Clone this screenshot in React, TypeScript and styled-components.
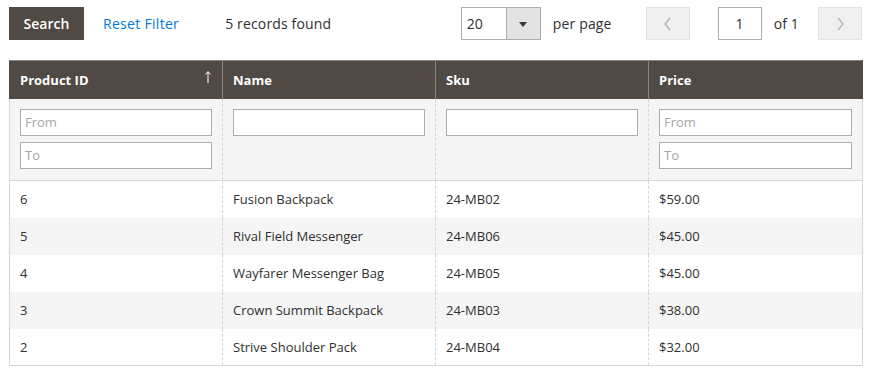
import React from "react";
import styled, { createGlobalStyle } from "styled-components";

const Global = createGlobalStyle`
  html, body { margin: 0; padding: 0; background: #fff; }
  body { font-family: "Open Sans", "Liberation Sans", sans-serif; color: #303030; font-size: 14px; }
  * { box-sizing: border-box; }
`;

const Page = styled.div`
  width: 871px;
  padding: 7px 9px 0 9px;
`;

const Toolbar = styled.div`
  display: flex;
  justify-content: space-between;
  align-items: center;
  height: 33px;
`;

const Group = styled.div`
  display: flex;
  align-items: center;
  height: 33px;
`;

const SearchButton = styled.button`
  width: 75px;
  height: 33px;
  border: 0;
  background: #514943;
  color: #fff;
  font-family: inherit;
  font-size: 14px;
  font-weight: 600;
  padding: 0;
  cursor: pointer;
`;

const LinkButton = styled.a`
  margin-left: 19px;
  color: #007bdb;
  font-size: 14px;
  letter-spacing: 0.3px;
  text-decoration: none;
  cursor: pointer;
`;

const Label = styled.span<{ $ml: number }>`
  margin-left: ${(p) => p.$ml}px;
  font-size: 14px;
  letter-spacing: 0.15px;
  color: #303030;
  white-space: nowrap;
`;

const Select = styled.div`
  display: flex;
  width: 80px;
  height: 33px;
  border: 1px solid #adadad;
  background: #fff;
`;

const SelectValue = styled.div`
  flex: 1;
  display: flex;
  align-items: center;
  padding-left: 5px;
  font-size: 14px;
`;

const SelectToggle = styled.div`
  width: 34px;
  display: flex;
  align-items: center;
  justify-content: center;
  background: #e3e3e3;
  border-left: 1px solid #adadad;
`;

const Caret = styled.span`
  width: 0;
  height: 0;
  border-left: 4px solid transparent;
  border-right: 4px solid transparent;
  border-top: 5px solid #41362f;
  margin-top: 1px;
`;

const NavButton = styled.button<{ $ml: number }>`
  margin-left: ${(p) => p.$ml}px;
  width: 44px;
  height: 33px;
  border: 1px solid #e3e3e3;
  background: #f0f0f0;
  display: flex;
  align-items: center;
  justify-content: center;
  padding: 0;
`;

const PageInput = styled.div`
  margin-left: 28px;
  width: 44px;
  height: 33px;
  border: 1px solid #adadad;
  display: flex;
  align-items: center;
  justify-content: center;
  font-size: 14px;
`;

const Table = styled.table`
  margin-top: 20px;
  width: 853px;
  border-collapse: collapse;
  table-layout: fixed;
  border-left: 1px solid #d6d6d6;
  border-right: 1px solid #d6d6d6;
  border-bottom: 1px solid #d6d6d6;
`;

const Th = styled.th`
  height: 38px;
  background: #514943;
  color: #fff;
  font-size: 13px;
  font-weight: 700;
  text-align: left;
  padding: 0 10px;
  border-left: 1px solid #8a837f;
  border-right: 1px solid #8a837f;
  border-top: 1px solid #8a837f;
  position: relative;
  &:first-child { border-left-color: #514943; }
  &:last-child { border-right-color: #514943; }
`;

const SortArrow = styled.svg`
  position: absolute;
  right: 10px;
  top: 9px;
`;

const FilterCell = styled.td`
  background: #f5f5f5;
  vertical-align: top;
  padding: 10px 10px 10px 10px;
  height: 82px;
  border-left: 1px dashed #d6d6d6;
  border-bottom: 1px solid #d6d6d6;
  &:first-child { border-left: 0; }
`;

const FilterInput = styled.div<{ $gap?: boolean }>`
  height: 27px;
  border: 1px solid #adadad;
  background: #fff;
  color: #a6a6a6;
  font-size: 13px;
  display: flex;
  align-items: center;
  padding-left: 4px;
  margin-top: ${(p) => (p.$gap ? 6 : 0)}px;
`;

const Row = styled.tr<{ $alt: boolean }>`
  background: ${(p) => (p.$alt ? "#f5f5f5" : "#fff")};
`;

const Td = styled.td`
  height: 37px;
  padding: 0 10px;
  font-size: 13px;
  color: #303030;
  border-left: 1px dashed #d6d6d6;
  &:first-child { border-left: 0; }
`;

const Chevron = ({ dir }: { dir: "left" | "right" }) => (
  <svg width="10" height="14" viewBox="0 0 10 14">
    <polyline
      points={dir === "left" ? "7,1 2,7 7,13" : "3,1 8,7 3,13"}
      fill="none"
      stroke="#adadad"
      strokeWidth="1.2"
    />
  </svg>
);

const rows = [
  ["6", "Fusion Backpack", "24-MB02", "$59.00"],
  ["5", "Rival Field Messenger", "24-MB06", "$45.00"],
  ["4", "Wayfarer Messenger Bag", "24-MB05", "$45.00"],
  ["3", "Crown Summit Backpack", "24-MB03", "$38.00"],
  ["2", "Strive Shoulder Pack", "24-MB04", "$32.00"],
];

export default function App() {
  return (
    <Page>
      <Global />
      <Toolbar>
        <Group>
          <SearchButton>Search</SearchButton>
          <LinkButton>Reset Filter</LinkButton>
          <Label $ml={46}>5 records found</Label>
        </Group>
        <Group>
          <Select>
            <SelectValue>20</SelectValue>
            <SelectToggle>
              <Caret />
            </SelectToggle>
          </Select>
          <Label $ml={12}>per page</Label>
          <NavButton $ml={34}>
            <Chevron dir="left" />
          </NavButton>
          <PageInput>1</PageInput>
          <Label $ml={12}>of 1</Label>
          <NavButton $ml={19}>
            <Chevron dir="right" />
          </NavButton>
        </Group>
      </Toolbar>
      <Table>
        <colgroup>
          <col style={{ width: 213 }} />
          <col style={{ width: 213 }} />
          <col style={{ width: 213 }} />
          <col style={{ width: 214 }} />
        </colgroup>
        <thead>
          <tr>
            <Th>
              Product ID
              <SortArrow width="8" height="14" viewBox="0 0 8 14">
                <line x1="4" y1="2" x2="4" y2="13" stroke="#fff" strokeWidth="1" />
                <polyline points="1.5,4.5 4,1.5 6.5,4.5" fill="none" stroke="#fff" strokeWidth="1" />
              </SortArrow>
            </Th>
            <Th>Name</Th>
            <Th>Sku</Th>
            <Th>Price</Th>
          </tr>
          <tr>
            <FilterCell>
              <FilterInput>From</FilterInput>
              <FilterInput $gap>To</FilterInput>
            </FilterCell>
            <FilterCell>
              <FilterInput />
            </FilterCell>
            <FilterCell>
              <FilterInput />
            </FilterCell>
            <FilterCell>
              <FilterInput>From</FilterInput>
              <FilterInput $gap>To</FilterInput>
            </FilterCell>
          </tr>
        </thead>
        <tbody>
          {rows.map((r, i) => (
            <Row key={r[0]} $alt={i % 2 === 1}>
              {r.map((c, j) => (
                <Td key={j}>{c}</Td>
              ))}
            </Row>
          ))}
        </tbody>
      </Table>
    </Page>
  );
}
